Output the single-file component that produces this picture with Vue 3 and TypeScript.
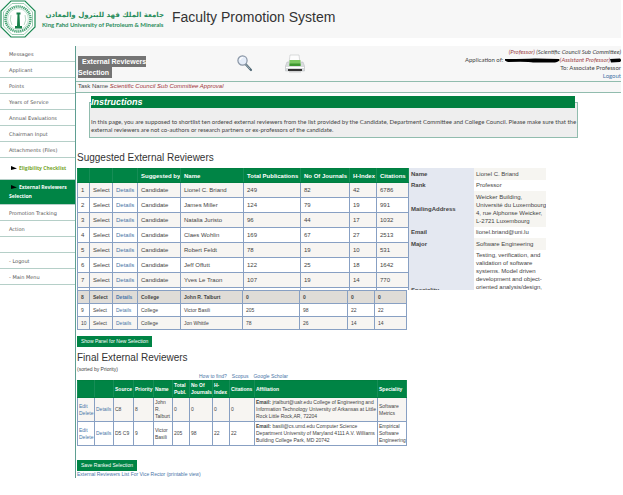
<script setup lang="ts">
interface Reviewer {
  id: number
  source: string
  name: string
  publications: number
  journals: number
  hIndex: number
  citations: number
}

interface Ranked {
  source: string
  priority: number
  name: string
  counts: number[]
  email: string
  affiliation: string
  speciality: string
}

const menu: string[] = [
  'Messages', 'Applicant', 'Points', 'Years of Service',
  'Annual Evaluations', 'Chairman Input', 'Attachments (Files)',
]

const candidates: Reviewer[] = [
  { id: 1, source: 'Candidate', name: 'Lionel C. Briand', publications: 249, journals: 82, hIndex: 42, citations: 6786 },
  { id: 2, source: 'Candidate', name: 'James Miller', publications: 124, journals: 79, hIndex: 19, citations: 991 },
  { id: 3, source: 'Candidate', name: 'Natalia Juristo', publications: 96, journals: 44, hIndex: 17, citations: 1032 },
  { id: 4, source: 'Candidate', name: 'Claes Wohlin', publications: 169, journals: 67, hIndex: 27, citations: 2513 },
  { id: 5, source: 'Candidate', name: 'Robert Feldt', publications: 78, journals: 19, hIndex: 10, citations: 531 },
  { id: 6, source: 'Candidate', name: 'Jeff Offutt', publications: 122, journals: 25, hIndex: 18, citations: 1642 },
  { id: 7, source: 'Candidate', name: 'Yves Le Traon', publications: 107, journals: 19, hIndex: 14, citations: 770 },
]

const college: Reviewer[] = [
  { id: 8, source: 'College', name: 'John R. Talburt', publications: 0, journals: 0, hIndex: 0, citations: 0 },
  { id: 9, source: 'College', name: 'Victor Basili', publications: 205, journals: 98, hIndex: 22, citations: 22 },
  { id: 10, source: 'College', name: 'Jon Whittle', publications: 78, journals: 26, hIndex: 14, citations: 14 },
]

const details: { label: string; value: string }[] = [
  { label: 'Name', value: 'Lionel C. Briand' },
  { label: 'Rank', value: 'Professor' },
  { label: 'MailingAddress', value: 'Weicker Building,\nUniversité du Luxembourg\n4, rue Alphonse Weicker,\nL-2721 Luxembourg' },
  { label: 'Email', value: 'lionel.briand@uni.lu' },
  { label: 'Major', value: 'Software Engineering' },
  { label: 'Speciality', value: 'Testing, verification, and\nvalidation of software\nsystems. Model driven\ndevelopment and object-\noriented analysis/design,' },
]

const ranked: Ranked[] = [
  {
    source: 'C8', priority: 8, name: 'John R. Talburt', counts: [0, 0, 0, 0], email: 'jrtalburt@ualr.edu',
    affiliation: 'College of Engineering and Information Technology University of Arkansas at Little Rock Little Rock,AR, 72204',
    speciality: 'Software Metrics',
  },
  {
    source: 'D5 C9', priority: 9, name: 'Victor Basili', counts: [205, 98, 22, 22], email: 'basili@cs.umd.edu',
    affiliation: 'Computer Science Department University of Maryland 4111 A.V. Williams Building College Park, MD 20742',
    speciality: 'Empirical Software Engineering',
  },
]
</script>

<template>
  <div class="page">
    <header class="banner">
      <svg class="seal" viewBox="0 0 36 38" aria-hidden="true">
        <path d="M11 1H25L35 11V27L25 37H11L1 27V11Z" fill="#fff" stroke="#1d8a54" stroke-width="1.2" />
        <path d="M12 3.500H24L32.500 12V26L24 34.500H12L3.500 26V12Z" fill="none" stroke="#5aab80" stroke-width=".6" />
        <circle cx="18" cy="19" r="12.500" fill="none" stroke="#4ba577" stroke-width="2.600" stroke-dasharray="1.300 .7" />
        <circle cx="18" cy="19" r="10.400" fill="#fff" stroke="#8cc5a6" stroke-width=".5" />
        <path d="M16.500 12.500H20.500V14.500H19.500L20 26H22V28.500H15V26H17L17.500 14.500H16.500Z" fill="#17804a" />
        <path d="M11 15Q9 20 12 25M25 15Q27 20 24 25" fill="none" stroke="#a5d0b7" stroke-width=".8" />
      </svg>
      <div class="university">
        <span class="arabic" lang="ar" dir="rtl">جامعة الملك فهد للبترول والمعادن</span>
        <span class="english">King Fahd University of Petroleum &amp; Minerals</span>
      </div>
      <h1>Faculty Promotion System</h1>
    </header>

    <div class="layout">
      <nav class="side">
        <a v-for="item in menu" :key="item" href="#">{{ item }}</a>
        <a href="#" class="eligibility"><svg class="arrow" viewBox="0 0 6 4"><path d="M0 0L6 2.500L0 4Z" /></svg>Eligibility Checklist</a>
        <a href="#" class="current"><span><svg class="arrow" viewBox="0 0 6 4"><path d="M0 0L6 2.500L0 4Z" /></svg>External Reviewers Selection</span></a>
        <a href="#">Promotion Tracking</a>
        <a href="#">Action</a>
        <div class="gap"></div>
        <a href="#">- Logout</a>
        <a href="#">- Main Menu</a>
      </nav>

      <main>
        <section class="top">
          <h2 class="title"><span>External Reviewers Selection</span></h2>
          <div class="tools">
            <button type="button" aria-label="Search">
              <svg viewBox="0 0 20 20">
                <path d="M9.500 10L15 16" stroke="#536b78" stroke-width="2.200" stroke-linecap="round" />
                <path d="M9 9.500L14 15" stroke="#aebdc6" stroke-width=".8" />
                <circle cx="6.500" cy="6.500" r="4.600" fill="#e5edf9" stroke="#8995a5" stroke-width="1.200" />
                <path d="M4 6Q4.500 3.500 7 3.500" fill="none" stroke="#fff" stroke-width="1.200" />
              </svg>
            </button>
            <button type="button" aria-label="Print">
              <svg viewBox="0 0 20 20">
                <path d="M5 1H14L15 9H4Z" fill="#fdfdfd" stroke="#c4c6c8" stroke-width=".6" />
                <path d="M2 8H18L19.500 12V17H.5V12Z" fill="#d9dcde" stroke="#b5b9bc" stroke-width=".5" />
                <path d="M4.500 6H15.500V12H4.500Z" fill="#7cc862" />
                <path d="M4.500 9.500H15.500V12H4.500Z" fill="#3f9832" />
                <path d="M1 13H19V14H1Z" fill="#fff" />
                <path d="M3 15H17V17H3Z" fill="#333" />
                <path d="M4 17H16V18.500H4Z" fill="#d0d1d2" />
              </svg>
            </button>
          </div>
          <div class="who">
            <p><em><span class="red">(Professor)</span> (Scientific Council Sub Committee)</em></p>
            <p>Application of:
              <svg class="mask" viewBox="0 0 55 5"><path d="M0 1Q18 1 30 .5L54 1Q56 3 50 4.500H28Q24 3.500 3 4Q-1 3 0 1Z" /></svg>
              <em class="red">(Assistant Professor)</em><svg class="mask small" viewBox="0 0 11 5"><path d="M0 1L10 .5Q12 2 10 4L1 4.500Z" /></svg>
            </p>
            <p>To: Associate Professor</p>
            <p><a href="#">Logout</a></p>
          </div>
        </section>
        <p class="task">Task Name <em>Scientific Council Sub Committee Approval</em></p>

        <section class="instructions">
          <h3>Instructions</h3>
          <p>In this page, you are supposed to shortlist ten ordered external reviewers from the list provided by the Candidate, Department Committee and College Council. Please make sure that the external reviewers are not co-authors or research partners or ex-professors of the candidate.</p>
        </section>

        <h2>Suggested External Reviewers</h2>
        <div class="pair">
          <table class="grid reviewers">
            <colgroup>
              <col class="w12"><col class="w23"><col class="w25"><col class="w43"><col class="w63"><col class="w57"><col class="w49"><col class="w27"><col class="w32">
            </colgroup>
            <thead>
              <tr>
                <th></th><th></th><th></th><th class="by">Suggested by</th><th>Name</th><th>Total Publications</th><th>No Of Journals</th><th>H-Index</th><th>Citations</th>
              </tr>
            </thead>
            <tbody>
              <tr v-for="r in candidates" :key="r.id">
                <td>{{ r.id }}</td><td>Select</td><td><a href="#">Details</a></td><td>{{ r.source }}</td><td>{{ r.name }}</td><td>{{ r.publications }}</td><td>{{ r.journals }}</td><td>{{ r.hIndex }}</td><td>{{ r.citations }}</td>
              </tr>
              <tr class="stub"><td v-for="n in 9" :key="n"></td></tr>
            </tbody>
          </table>
          <div class="detail-box">
            <table class="detail">
              <tbody>
                <tr v-for="d in details" :key="d.label">
                  <th scope="row">{{ d.label }}</th><td>{{ d.value }}</td>
                </tr>
              </tbody>
            </table>
          </div>
        </div>
        <table class="grid reviewers college">
          <colgroup>
            <col class="w12"><col class="w23"><col class="w25"><col class="w43"><col class="w62"><col class="w57"><col class="w48"><col class="w27"><col class="w32">
          </colgroup>
          <tbody>
            <tr v-for="r in college" :key="r.id" :class="{ picked: r.id === 8 }">
              <td>{{ r.id }}</td><td>Select</td><td><a href="#">Details</a></td><td>{{ r.source }}</td><td>{{ r.name }}</td><td>{{ r.publications }}</td><td>{{ r.journals }}</td><td>{{ r.hIndex }}</td><td>{{ r.citations }}</td>
            </tr>
          </tbody>
        </table>
        <button type="button" class="action">Show Panel for New Selection</button>

        <h2 class="final-title">Final External Reviewers</h2>
        <p class="sorted">(sorted by Priority)</p>
        <p class="help"><a href="#">How to find?</a><a href="#">Scopus</a><a href="#">Google Scholar</a></p>
        <table class="grid final">
          <colgroup>
            <col class="w17"><col class="w19"><col class="w20"><col class="w20"><col class="w19"><col class="w17"><col class="w23"><col class="w17"><col class="w25"><col class="w123"><col class="w29">
          </colgroup>
          <thead>
            <tr>
              <th></th><th></th><th>Source</th><th>Priority</th><th>Name</th><th>Total Publ.</th><th>No Of Journals</th><th>H-Index</th><th>Citations</th><th>Affiliation</th><th>Speciality</th>
            </tr>
          </thead>
          <tbody>
            <tr v-for="r in ranked" :key="r.priority">
              <td><a href="#">Edit</a><br><a href="#">Delete</a></td>
              <td><a href="#">Details</a></td>
              <td>{{ r.source }}</td><td>{{ r.priority }}</td><td>{{ r.name }}</td>
              <td v-for="(c, i) in r.counts" :key="i">{{ c }}</td>
              <td><b>Email:</b> {{ r.email }} {{ r.affiliation }}</td>
              <td>{{ r.speciality }}</td>
            </tr>
          </tbody>
        </table>
        <button type="button" class="action save">Save Ranked Selection</button>
        <p class="printable"><a href="#">External Reviewers List For Vice Rector (printable view)</a></p>
      </main>
    </div>
  </div>
</template>

<style>
body { background: #fff; }
</style>

<style scoped>
.page { font: 6px/8px "Liberation Sans", Arial, sans-serif; color: #444; padding-right: 2px; }
.page * { box-sizing: border-box; }
h1, h2, h3, p { margin: 0; font-weight: 400; }
a { color: #4a76a8; text-decoration: none; }
button { font: inherit; border: 0; padding: 0; background: none; }
.banner { display: flex; align-items: flex-start; height: 38px; background: #f7f7f7; margin-bottom: 8px; }
.seal { width: 36px; height: 38px; flex: none; }
.university { width: 122px; margin: 10px 8px 0 6px; display: flex; flex-direction: column; color: #2a8d5b; font-weight: 700; white-space: nowrap; }
.arabic { font: 700 7px/10px "DejaVu Sans", sans-serif; }
.english { font: 700 6px/9px Lato, sans-serif; }
h1 { font: 14px/20px "Liberation Sans", Arial, sans-serif; color: #333; margin-top: 7px; }

.layout { display: flex; align-items: flex-start; }
.side { width: 75px; flex: none; font: 5px/8px "DejaVu Sans", sans-serif; }
.side a, .gap { display: flex; align-items: center; height: 16px; padding-left: 9px; border-bottom: 1px solid #b5cfc8; color: #555; white-space: nowrap; }
.side .eligibility { height: 22px; padding: 0 0 2px 9px; color: #76a52c; font: 700 5px/8px "Open Sans", sans-serif; }
.side .current { height: 25px; padding-right: 8px; background: #008445; color: #fff; font: 700 5px/9px "Open Sans", sans-serif; white-space: normal; }
.arrow { width: 6px; height: 4px; margin: 0 2px; fill: #000; flex: none; }

main { flex: 1; min-width: 0; border-left: 1px solid #5f9f92; }
.top { display: flex; justify-content: space-between; align-items: flex-start; height: 35px; background: #f7f7f7; }
.title { width: 84px; padding: 10px 0 0 2px; font: 700 7px/11px "Liberation Sans", sans-serif; color: #fff; }
.title span { background: #747474; padding: 2px 3px 2px 4px; }
.tools { display: flex; gap: 29px; flex: 1; padding: 8px 0 0 76px; }
.tools button, .tools svg { display: block; width: 20px; height: 20px; }
.who { text-align: right; padding-top: 2px; white-space: nowrap; font-family: Lato, sans-serif; }
.red { color: #9c4044; }
.mask { width: 55px; height: 5px; vertical-align: -1px; }
.mask.small { width: 11px; }
.task { height: 12px; line-height: 9px; padding-left: 2px; background: #f7f7f7; border: solid #91bcae; border-width: 1px 0; }
.task em { color: #a03438; }

.instructions { position: relative; margin: 9px 43px 0 13px; height: 36px; border: 1px solid #91bcae; background: #eee; padding: 15px 0 0 1px; }
.instructions h3 { position: absolute; top: -7px; left: 1px; right: 2px; background: #008040; color: #fff; font: italic 700 9px/12px "Liberation Sans", sans-serif; }
.instructions p { color: #444; font-family: Lato, sans-serif; }
main > h2:not(.title) { font: 10px/14px "Liberation Sans", sans-serif; color: #333; padding-left: 1px; }
.instructions + h2 { margin: 13px 0 3px; }

.grid { border-collapse: collapse; table-layout: fixed; margin-left: 1px; width: 331px; }
.grid th, .grid td { border: 1px solid #88a0c3; padding: 0 2px; text-align: left; overflow: hidden; }
.grid th { background: #008445; border-color: #007f40 #168d56; color: #fff; font-weight: 700; white-space: nowrap; }
.grid tbody tr:nth-child(odd) { background: #f7f5f2; }
.reviewers thead tr { height: 14px; }
.reviewers tbody tr { height: 15px; }
.reviewers td, .reviewers th { line-height: 8px; padding: 0 0 0 3px; }
.reviewers tbody .stub { height: 3px; background: #fff; }
.stub td { line-height: 0; }
.reviewers.college { width: 329px; }
.college tbody tr { height: 13px; }
.college tr td { font-size: 5px; }
.grid tbody tr.picked:nth-child(odd) { background: #dfdcd7; font-weight: 700; }
.w12 { width: 12px; } .w17 { width: 17px; } .w19 { width: 19px; } .w20 { width: 20px; }
.w23 { width: 23px; } .w25 { width: 25px; } .w27 { width: 27px; } .w29 { width: 29px; }
.w32 { width: 32px; } .w43 { width: 43px; } .w48 { width: 48px; } .w49 { width: 49px; }
.w57 { width: 57px; } .w62 { width: 62px; } .w63 { width: 63px; } .w123 { width: 123px; }

.pair { display: flex; height: 122px; overflow: hidden; }
.pair .grid { flex: none; }
.detail-box { height: 122px; overflow: hidden; }
.detail { border-collapse: collapse; }
.detail th, .detail td { padding: 2px; text-align: left; white-space: pre; }
.detail th { width: 65px; background: #e4e8f1; font-weight: 700; color: #444; }
.detail td { width: 72px; padding-right: 0; }
.detail tr:nth-child(odd) td { background: #f6f5f1; }
.detail tr:nth-child(even) > * { padding-top: 1px; }
.detail tr:last-child { height: 80px; }
.detail tr:last-child td { vertical-align: top; }

.action { display: block; height: 11px; margin: 6px 0 0 1px; padding: 0 4px; background: #008445; color: #fff; font-size: 5px; line-height: 11px; }
.final-title { margin-top: 4px; }
.sorted { font-size: 5px; padding-left: 1px; }
.help { display: flex; gap: 5px; font-size: 5px; line-height: 6px; padding: 0 0 1px 123px; }
.final { font-size: 5px; line-height: 7px; width: 329px; }
.final thead tr { height: 17px; }
.final th, .final td { padding: 0 1px; white-space: normal; }
.final tbody tr { height: 24px; }
.save { margin-top: 14px; }
.printable { font-size: 5px; line-height: 6px; padding: 0 0 1px 1px; }
</style>
